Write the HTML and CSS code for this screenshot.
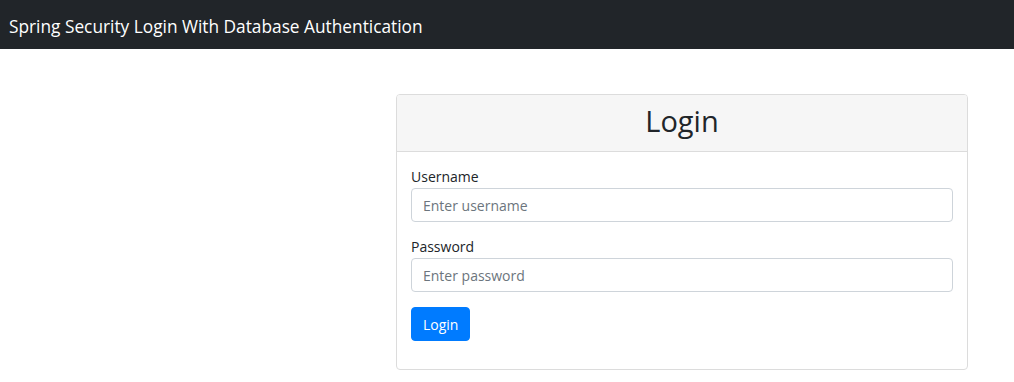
FILE: index.html
```html
<!DOCTYPE html>
<html lang="en">
<head>
<meta charset="utf-8">
<title>Login</title>
<link rel="stylesheet" href="styles.css">
</head>
<body>
<nav class="navbar">
  <span class="brand">Spring Security Login With Database Authentication</span>
</nav>
<main class="page">
  <section class="card">
    <header class="card-header">
      <h2 class="card-title">Login</h2>
    </header>
    <form class="card-body">
      <div class="form-group">
        <label class="label" for="username">Username</label>
        <input class="input" id="username" type="text" placeholder="Enter username">
      </div>
      <div class="form-group">
        <label class="label" for="password">Password</label>
        <input class="input" id="password" type="password" placeholder="Enter password">
      </div>
      <button class="btn" type="submit">Login</button>
    </form>
  </section>
</main>
</body>
</html>
```
FILE: styles.css
```css
* { box-sizing: border-box; }
html, body { margin: 0; padding: 0; }
body {
  font-family: "Open Sans", "Noto Sans", sans-serif;
  font-size: 14px;
  line-height: 1.5;
  color: #212529;
  background: #fff;
}
.navbar {
  height: 49px;
  background: #212529;
  display: flex;
  align-items: center;
  padding: 0 9px;
}
.brand {
  color: #fff;
  font-size: 17.3px;
  line-height: 1;
  padding-top: 4px;
}
.page {
  display: flex;
  justify-content: flex-end;
  padding: 45px 46px 0 0;
}
.card {
  width: 572px;
  border: 1px solid #dcdcdc;
  border-radius: 4px;
  background: #fff;
}
.card-header {
  height: 57px;
  background: #f6f6f6;
  border-bottom: 1px solid #dcdcdc;
  border-radius: 3px 3px 0 0;
  display: flex;
  align-items: center;
  justify-content: center;
}
.card-title {
  margin: 0 0 4px;
  font-size: 29px;
  font-weight: 500;
  line-height: 1.2;
}
.card-body {
  display: flex;
  flex-direction: column;
  align-items: flex-start;
  padding: 14px 14px 28px;
}
.form-group {
  align-self: stretch;
  display: flex;
  flex-direction: column;
  margin-bottom: 14px;
}
.label {
  line-height: 21px;
  margin-bottom: 1px;
}
.input {
  height: 34px;
  padding: 0 11px;
  border: 1px solid #ced4da;
  border-radius: 4px;
  font: inherit;
  color: #495057;
  background: #fff;
}
.input::placeholder { color: #6c757d; opacity: 1; }
.btn {
  height: 34px;
  margin-top: 1px;
  padding: 0 11px;
  border: 1px solid #007bff;
  border-radius: 4px;
  background: #007bff;
  color: #fff;
  font: inherit;
  cursor: pointer;
}
```
